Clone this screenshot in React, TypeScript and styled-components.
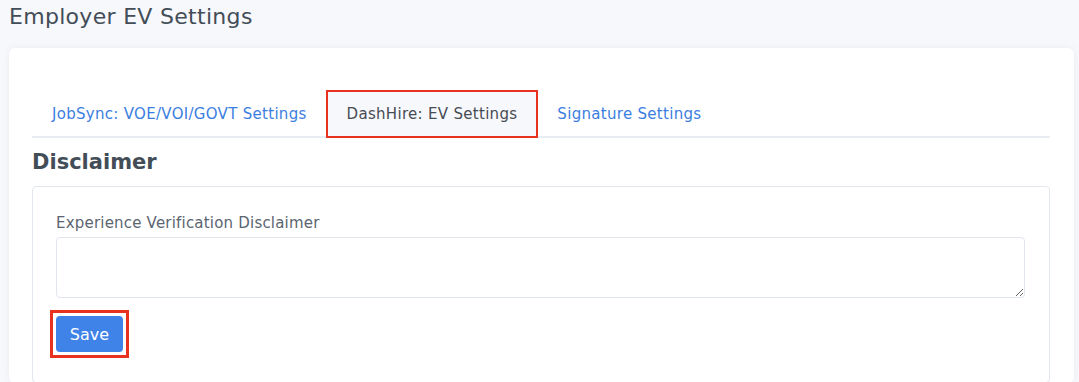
import React from 'react';
import styled, { createGlobalStyle } from 'styled-components';

const GlobalStyle = createGlobalStyle`
  html, body {
    margin: 0;
    padding: 0;
    background: #f7f8fb;
    font-family: 'DejaVu Sans', 'Noto Sans', sans-serif;
    color: #434d57;
  }
`;

const Page = styled.div`
  padding: 0 5px 0 9px;
  height: 382px;
  overflow: hidden;
`;

const PageTitle = styled.h1`
  margin: 0;
  padding-top: 3px;
  font-size: 22px;
  font-weight: 500;
  letter-spacing: 0.3px;
  line-height: 28px;
  color: #434d57;
`;

const Card = styled.div`
  margin-top: 17px;
  background: #fff;
  border-radius: 6px;
  padding: 43px 24px 0 23px;
  box-shadow: 0 0 6px rgba(200, 205, 215, 0.25);
`;

const TabList = styled.div`
  display: flex;
  border-bottom: 2px solid #e9edf2;
`;

const Tab = styled.button<{ $active?: boolean }>`
  border: 0;
  margin: 0 0 -1px 0;
  padding: 0 20px;
  height: 46px;
  font-family: inherit;
  font-size: 15px;
  letter-spacing: 0.3px;
  background: ${(p) => (p.$active ? '#f7f8fb' : 'transparent')};
  color: ${(p) => (p.$active ? '#464c53' : '#3b7ee0')};
  outline: ${(p) => (p.$active ? '2px solid #e8321f' : 'none')};
  outline-offset: -1px;
  cursor: pointer;
`;

const SectionTitle = styled.h2`
  margin: 0;
  padding: 12px 0 12px;
  font-size: 21px;
  font-weight: 600;
  line-height: 24px;
  color: #434d57;
`;

const Panel = styled.div`
  border: 1px solid #e3e8ee;
  border-radius: 4px;
  padding: 26px 24px 24px 23px;
`;

const Label = styled.label`
  display: block;
  font-size: 15px;
  letter-spacing: 0.2px;
  line-height: 20px;
  color: #5b6570;
  margin-bottom: 4px;
`;

const TextArea = styled.textarea`
  display: block;
  box-sizing: border-box;
  width: 100%;
  height: 61px;
  border: 1px solid #e1e6ec;
  border-radius: 4px;
  font-family: inherit;
  font-size: 14px;
  resize: vertical;
`;

const SaveWrap = styled.div`
  display: inline-block;
  margin-top: 12px;
  margin-left: -6px;
  padding: 3px;
  border: 3px solid #e8321f;
`;

const SaveButton = styled.button`
  display: block;
  width: 67px;
  height: 36px;
  border: 0;
  border-radius: 4px;
  background: #3f83e8;
  color: #fff;
  font-family: inherit;
  font-size: 16px;
  cursor: pointer;
`;

export default function App() {
  const tabs = ['JobSync: VOE/VOI/GOVT Settings', 'DashHire: EV Settings', 'Signature Settings'];
  return (
    <>
      <GlobalStyle />
      <Page>
        <PageTitle>Employer EV Settings</PageTitle>
        <Card>
          <TabList>
            {tabs.map((t, i) => (
              <Tab key={t} $active={i === 1}>
                {t}
              </Tab>
            ))}
          </TabList>
          <SectionTitle>Disclaimer</SectionTitle>
          <Panel>
            <Label>Experience Verification Disclaimer</Label>
            <TextArea />
            <SaveWrap>
              <SaveButton>Save</SaveButton>
            </SaveWrap>
          </Panel>
        </Card>
      </Page>
    </>
  );
}
